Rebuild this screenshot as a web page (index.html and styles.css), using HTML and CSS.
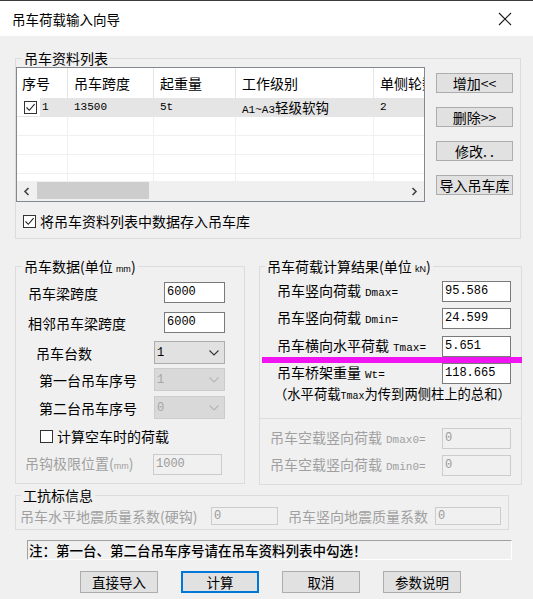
FILE: index.html
```html
<!DOCTYPE html>
<html lang="zh-CN">
<head>
<meta charset="utf-8">
<title>吊车荷载输入向导</title>
<link rel="stylesheet" href="styles.css">
</head>
<body>
<div class="win">
  <div class="titlebar">
    <span class="title">吊车荷载输入向导</span>
    <svg class="close" width="14" height="14" viewBox="0 0 14 14"><path d="M1 1L13 13M13 1L1 13" stroke="#1a1a1a" stroke-width="1.1" fill="none"/></svg>
  </div>
  <div class="client">
    <fieldset class="grp grp-list">
      <legend>吊车资料列表</legend>
      <div class="list-row">
        <div class="table">
          <div class="thead">
            <div class="th">序号</div><div class="th">吊车跨度</div><div class="th">起重量</div><div class="th">工作级别</div><div class="th">单侧轮数</div>
          </div>
          <div class="tbody">
            <div class="tr sel">
              <div class="td td-first">
                <span class="cbwrap"><span class="cb"><svg width="11" height="11" viewBox="0 0 11 11"><path d="M1.5 5.5L4.3 8.3L9.6 2.2" stroke="#222" stroke-width="1.1" fill="none"/></svg></span></span>
                <span class="idx">1</span>
              </div>
              <div class="td">13500</div>
              <div class="td">5t</div>
              <div class="td">A1~A3<span class="cjk">轻级软钩</span></div>
              <div class="td">2</div>
            </div>
            <div class="tr"><div class="td"></div><div class="td"></div><div class="td"></div><div class="td"></div><div class="td"></div></div>
            <div class="tr"><div class="td"></div><div class="td"></div><div class="td"></div><div class="td"></div><div class="td"></div></div>
            <div class="tr"><div class="td"></div><div class="td"></div><div class="td"></div><div class="td"></div><div class="td"></div></div>
            <div class="tr"><div class="td"></div><div class="td"></div><div class="td"></div><div class="td"></div><div class="td"></div></div>
          </div>
          <div class="hscroll">
            <span class="sarrow"><svg width="8" height="9" viewBox="0 0 8 9"><path d="M5.5 1L2 4.5L5.5 8" stroke="#444" stroke-width="1.6" fill="none"/></svg></span>
            <span class="track"><span class="thumb"></span></span>
            <span class="sarrow"><svg width="8" height="9" viewBox="0 0 8 9"><path d="M2.5 1L6 4.5L2.5 8" stroke="#444" stroke-width="1.6" fill="none"/></svg></span>
          </div>
        </div>
        <div class="side">
          <button class="btn sbtn">增加&lt;&lt;</button>
          <button class="btn sbtn">删除&gt;&gt;</button>
          <button class="btn sbtn">修改. .</button>
          <button class="btn sbtn">导入吊车库</button>
        </div>
      </div>
      <div class="chk-row">
        <span class="cb"><svg width="11" height="11" viewBox="0 0 11 11"><path d="M1.5 5.5L4.3 8.3L9.6 2.2" stroke="#222" stroke-width="1.1" fill="none"/></svg></span>
        <span>将吊车资料列表中数据存入吊车库</span>
      </div>
    </fieldset>

    <div class="mid">
      <fieldset class="grp grp-data">
        <legend>吊车数据(单位 <span class="tiny">mm</span>)</legend>
        <div class="frow l1"><span class="lbl">吊车梁跨度</span><span class="inp w61">6000</span></div>
        <div class="frow l2"><span class="lbl">相邻吊车梁跨度</span><span class="inp w61">6000</span></div>
        <div class="frow l3"><span class="lbl">吊车台数</span><span class="combo">1<svg width="10" height="6" viewBox="0 0 10 6"><path d="M0.5 0.5L5 5L9.5 0.5" stroke="#333" stroke-width="1.1" fill="none"/></svg></span></div>
        <div class="frow l4"><span class="lbl">第一台吊车序号</span><span class="combo dis">1<svg width="10" height="6" viewBox="0 0 10 6"><path d="M0.5 0.5L5 5L9.5 0.5" stroke="#b5b5b5" stroke-width="1.1" fill="none"/></svg></span></div>
        <div class="frow l5"><span class="lbl">第二台吊车序号</span><span class="combo dis">0<svg width="10" height="6" viewBox="0 0 10 6"><path d="M0.5 0.5L5 5L9.5 0.5" stroke="#b5b5b5" stroke-width="1.1" fill="none"/></svg></span></div>
        <div class="frow l6"><span class="cb"></span><span class="lbl">计算空车时的荷载</span></div>
        <div class="frow l7"><span class="lbl gray">吊钩极限位置(<span class="tiny">mm</span>)</span><span class="inp dis w69">1000</span></div>
      </fieldset>

      <fieldset class="grp grp-res">
        <legend>吊车荷载计算结果(单位 <span class="tiny">kN</span>)</legend>
        <div class="frow ra"><span class="lbl">吊车竖向荷载<span class="lat">Dmax=</span></span><span class="inp w69">95.586</span></div>
        <div class="frow rb"><span class="lbl">吊车竖向荷载<span class="lat">Dmin=</span></span><span class="inp w69">24.599</span></div>
        <div class="frow rc"><span class="lbl">吊车横向水平荷载<span class="lat">Tmax=</span></span><span class="inp w69">5.651</span></div>
        <div class="frow rd"><span class="lbl">吊车桥架重量<span class="lat">Wt=</span></span><span class="inp w69">118.665</span></div>
        <div class="rnote">（水平荷载<span class="lat0">Tmax</span>为传到两侧柱上的总和）</div>
        <div class="sep"></div>
        <div class="frow re"><span class="lbl gray">吊车空载竖向荷载<span class="lat">Dmax0=</span></span><span class="inp dis w69">0</span></div>
        <div class="frow rf"><span class="lbl gray">吊车空载竖向荷载<span class="lat">Dmin0=</span></span><span class="inp dis w69">0</span></div>
      </fieldset>
    </div>

    <fieldset class="grp grp-eq">
      <legend>工抗标信息</legend>
      <div class="eq-row">
        <span class="gray eq-l1">吊车水平地震质量系数(硬钩)</span>
        <span class="inp dis eq-i1">0</span>
        <span class="gray eq-l2">吊车竖向地震质量系数</span>
        <span class="inp dis eq-i2">0</span>
      </div>
    </fieldset>

    <div class="note">注：第一台、第二台吊车序号请在吊车资料列表中勾选！</div>

    <div class="btns">
      <button class="btn bb">直接导入</button>
      <button class="btn bb def">计算</button>
      <button class="btn bb">取消</button>
      <button class="btn bb">参数说明</button>
    </div>
  </div>
  <div class="mark"></div>
</div>
</body>
</html>
```
FILE: styles.css
```css
* { box-sizing: border-box; }
html, body { margin: 0; padding: 0; }
body {
  width: 533px; height: 599px; overflow: hidden;
  background: #f0f0f0;
  font-family: "Noto Sans CJK SC", "Noto Sans", sans-serif;
  font-size: 14px; line-height: 16px; color: #000;
}
.win { position: relative; width: 533px; height: 599px; background: #f0f0f0; }

.titlebar {
  height: 36px; background: #fff; border-top: 1px solid #3a3a3a;
  display: flex; align-items: center; justify-content: space-between;
  padding: 0 21px 0 12px;
}
.title { font-size: 13.5px; line-height: 16px; }
.close { display: block; }

.client { padding-left: 15px; }

fieldset.grp { margin: 0; padding: 0; border: 1px solid #dcdcdc; min-width: 0; }
fieldset.grp > legend {
  padding: 0 2px; margin-left: 6px;
  font-size: 14px; line-height: 16px; height: 16px; white-space: nowrap;
}
.tiny { font-family: "Liberation Sans", sans-serif; font-size: 9px; }

/* list group */
fieldset.grp-list { margin-top: 14px; width: 506px; padding-bottom: 7px; }
.list-row { display: flex; align-items: flex-start; margin-top: 1px; }
.table {
  width: 409px; height: 135px; border: 1px solid #828790; background: #fff;
  display: flex; flex-direction: column; overflow: hidden;
}
.thead, .tr { display: grid; grid-template-columns: 51px 86px 82px 138px 50px; }
.thead { height: 30px; }
.th {
  border-right: 1px solid #e5e5e5; padding: 7px 0 0 6px;
  font-size: 14px; line-height: 16px; white-space: nowrap; overflow: hidden;
}
.th:first-child { padding-left: 5px; }
.th:last-child { border-right: 0; }
.tbody { height: 83px; overflow: hidden; }
.tr { height: 19px; border-bottom: 1px solid #f0f0f0; }
.td {
  border-right: 1px solid #f0f0f0; padding-left: 6px;
  font-family: "Liberation Mono", monospace; font-size: 11px; line-height: 18px;
  white-space: nowrap; overflow: hidden;
}
.td:last-child { border-right: 0; }
.tr.sel { background: #e5e5e5; border-bottom-color: #e5e5e5; }
.tr.sel .td { border-right-color: #e5e5e5; }
.td-first { display: flex; padding-left: 0; }
.cbwrap { width: 23px; background: #fff; display: flex; align-items: center; justify-content: flex-end; padding-right: 3px; }
.idx { padding-left: 2px; }
.cjk { font-family: "Noto Sans CJK SC", sans-serif; font-size: 13.5px; }

.cb {
  width: 13px; height: 13px; border: 1px solid #333; background: #fff;
  display: inline-flex; align-items: center; justify-content: center; flex: none;
}
.cb svg { display: block; }

.hscroll { height: 20px; display: flex; background: #f0f0f0; }
.sarrow { width: 20px; display: flex; align-items: center; justify-content: center; }
.track { flex: 1; padding: 1px 0 2px 0; }
.thumb { display: block; width: 112px; height: 17px; background: #cdcdcd; }

.side { display: flex; flex-direction: column; gap: 14px; margin-left: 11px; padding-top: 6px; }
.btn {
  border: 1px solid #adadad; background: #e1e1e1; color: #000;
  font-family: "Noto Sans CJK SC", sans-serif; padding: 0; margin: 0;
}
.sbtn { width: 77px; height: 20px; font-size: 14px; line-height: 16px; }

.chk-row { display: flex; align-items: center; height: 20px; margin-top: 9px; padding-left: 7px; gap: 4px; }

/* middle groups */
.mid { display: flex; gap: 14px; margin-top: 19px; align-items: flex-start; }
fieldset.grp-data { width: 230px; height: 226px; }
fieldset.grp-res { width: 263px; height: 227px; }
fieldset.grp-res > legend { margin-left: 5px; }

.frow { display: flex; align-items: center; height: 21px; }
.frow .lbl { flex: 1; white-space: nowrap; }
.gray { color: #a0a0a0; }
.inp {
  height: 21px; border: 1px solid #7a7a7a; background: #fff; flex: none;
  font-family: "Liberation Mono", monospace; font-size: 12px; line-height: 19px;
  padding-left: 2px; white-space: nowrap;
}
.inp.dis { border-color: #cccccc; background: #f0f0f0; color: #9a9a9a; }
.w61 { width: 61px; margin-right: 19px; }
.w69 { width: 69px; }
.combo {
  width: 71px; height: 23px; margin-right: 19px; flex: none;
  border: 1px solid #adadad; background: #e1e1e1;
  display: flex; align-items: center; justify-content: space-between;
  padding: 0 5px 0 2px;
  font-family: "Liberation Mono", monospace; font-size: 12px;
}
.combo.dis { border-color: #cccccc; background: #d9d9d9; color: #a6a6a6; }

.grp-data .l1 { margin-top: 8px; padding-left: 12px; }
.grp-data .l2 { margin-top: 9px; padding-left: 12px; }
.grp-data .l3 { margin-top: 8px; padding-left: 20px; height: 23px; }
.grp-data .l4 { margin-top: 4px; padding-left: 23px; height: 23px; }
.grp-data .l5 { margin-top: 5px; padding-left: 23px; height: 23px; }
.grp-data .l6 { margin-top: 7px; padding-left: 24px; height: 20px; gap: 4px; }
.grp-data .l7 { margin-top: 8px; padding-left: 9px; }
.grp-data .l7 .inp { margin-right: 22px; }

.lat { font-family: "Liberation Mono", monospace; font-size: 11px; margin-left: 4px; }
.lat0 { font-family: "Liberation Mono", monospace; font-size: 10px; }
.grp-res .w69 { margin-right: 10px; }
.grp-res .ra { margin-top: 7px; padding-left: 17px; }
.grp-res .rb { margin-top: 6px; padding-left: 17px; }
.grp-res .rc { margin-top: 7px; padding-left: 17px; }
.grp-res .rd { margin-top: 6px; padding-left: 17px; }
.rnote { margin-top: 2px; padding-left: 14px; font-size: 13.3px; line-height: 16px; white-space: nowrap; }
.sep { margin-top: 13px; height: 1px; background: #dcdcdc; }
.grp-res .re { margin-top: 9px; padding-left: 10px; }
.grp-res .rf { margin-top: 6px; padding-left: 10px; }

/* eq group */
fieldset.grp-eq { width: 494px; margin-top: 2px; padding-bottom: 4px; }
fieldset.grp-eq > legend { margin-left: 5px; }
.eq-row { display: flex; align-items: center; height: 18px; margin-top: 4px; padding-left: 4px; white-space: nowrap; }
.eq-l1 { width: 191px; }
.eq-i1 { width: 67px; height: 18px; line-height: 16px; }
.eq-l2 { width: 147px; margin-left: 10px; }
.eq-i2 { width: 66px; height: 18px; line-height: 16px; }

.note {
  margin: 10px 0 0 12px; width: 485px; height: 20px;
  border: 1px solid; border-color: #a0a0a0 #ffffff #ffffff #a0a0a0;
  font-size: 13.5px; line-height: 18px; font-weight: 500; padding-left: 1px; white-space: nowrap;
}

.btns { display: flex; gap: 23px; margin-top: 11px; padding-left: 65px; }
.bb { width: 78px; height: 22px; font-size: 13.5px; line-height: 16px; }
.bb.def { border-color: #0078d7; box-shadow: inset 0 0 0 1px #0078d7; }

.mark { position: absolute; left: 262px; top: 357px; width: 260px; height: 6px; background: #f015f0; }
```
